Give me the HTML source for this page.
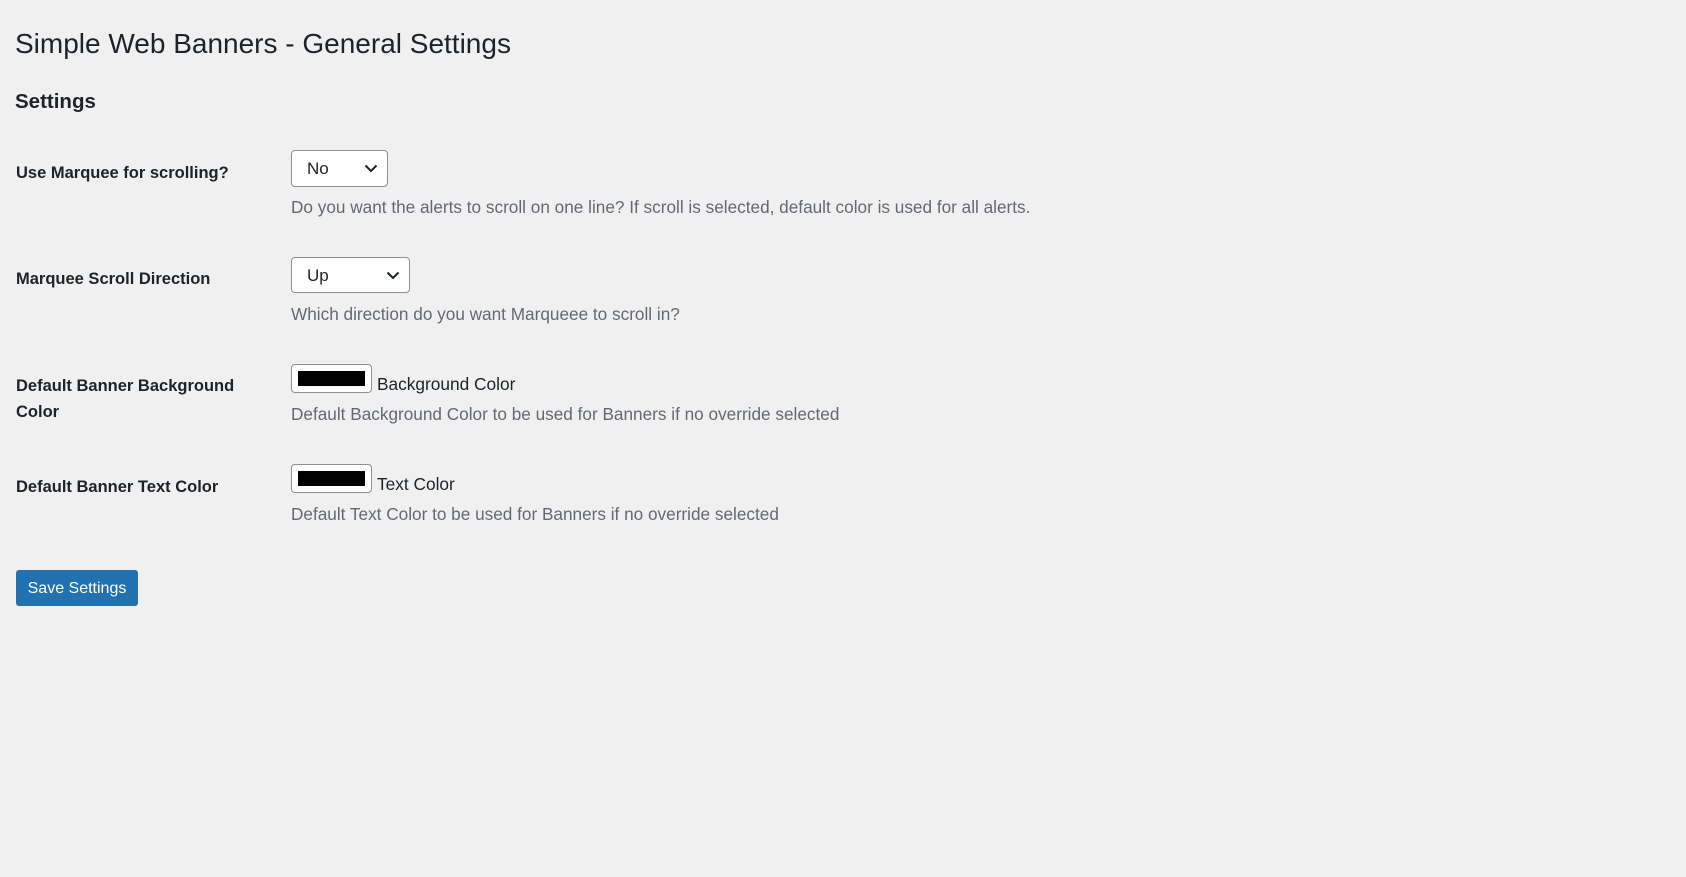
<!DOCTYPE html>
<html><head><meta charset="utf-8"><style>
body{margin:0;width:1686px;height:877px;background:#f0f0f1;font-family:"Liberation Sans",sans-serif;color:#1d2327;position:relative;overflow:hidden}
.a{position:absolute;white-space:nowrap}
h1{position:absolute;left:15px;top:26px;margin:0;font-size:28px;font-weight:400;line-height:36px}
h2{position:absolute;left:15px;top:89px;margin:0;font-size:20.5px;font-weight:600;line-height:26px}
.lbl{font-size:16.5px;font-weight:700;left:16px;line-height:26px}
.desc{font-size:17.2px;color:#646970;left:291px;line-height:22px}
.sel{position:absolute;left:291px;background:#fff;border:1px solid #8c8f94;border-radius:4px;box-sizing:border-box;font-size:17px;line-height:35px;padding-left:15px}
.sel svg{position:absolute;right:9px;top:13px}
.sw{position:absolute;left:291px;width:81px;height:29px;border:1px solid #8c8f94;border-radius:4px;background:#fff;box-sizing:border-box}
.sw i{position:absolute;left:6px;top:6px;right:6px;bottom:6px;background:#000}
.ct{font-size:17.3px;left:377px;line-height:22px}
.btn{position:absolute;left:16px;top:570px;width:122px;height:36px;background:#2271b1;border-radius:3px;color:#fff;font-size:16px;line-height:38px;text-align:center}
</style></head><body>
<h1>Simple Web Banners - General Settings</h1>
<h2>Settings</h2>

<div class="a lbl" style="top:160px">Use Marquee for scrolling?</div>
<div class="sel" style="top:150px;width:97px;height:37px">No<svg width="14" height="9" viewBox="0 0 14 9"><path d="M1.5 1.5L7 7L12.5 1.5" fill="none" stroke="#1d2327" stroke-width="2"/></svg></div>
<div class="a desc" style="top:196px">Do you want the alerts to scroll on one line? If scroll is selected, default color is used for all alerts.</div>

<div class="a lbl" style="top:266px">Marquee Scroll Direction</div>
<div class="sel" style="top:257px;width:119px;height:36px">Up<svg width="14" height="9" viewBox="0 0 14 9"><path d="M1.5 1.5L7 7L12.5 1.5" fill="none" stroke="#1d2327" stroke-width="2"/></svg></div>
<div class="a desc" style="top:303px">Which direction do you want Marqueee to scroll in?</div>

<div class="a lbl" style="top:373px">Default Banner Background</div>
<div class="a lbl" style="top:399px">Color</div>
<div class="sw" style="top:364px"><i></i></div>
<div class="a ct" style="top:373px">Background Color</div>
<div class="a desc" style="top:403px">Default Background Color to be used for Banners if no override selected</div>

<div class="a lbl" style="top:474px">Default Banner Text Color</div>
<div class="sw" style="top:464px"><i></i></div>
<div class="a ct" style="top:473px">Text Color</div>
<div class="a desc" style="top:503px">Default Text Color to be used for Banners if no override selected</div>

<div class="btn">Save Settings</div>
</body></html>
